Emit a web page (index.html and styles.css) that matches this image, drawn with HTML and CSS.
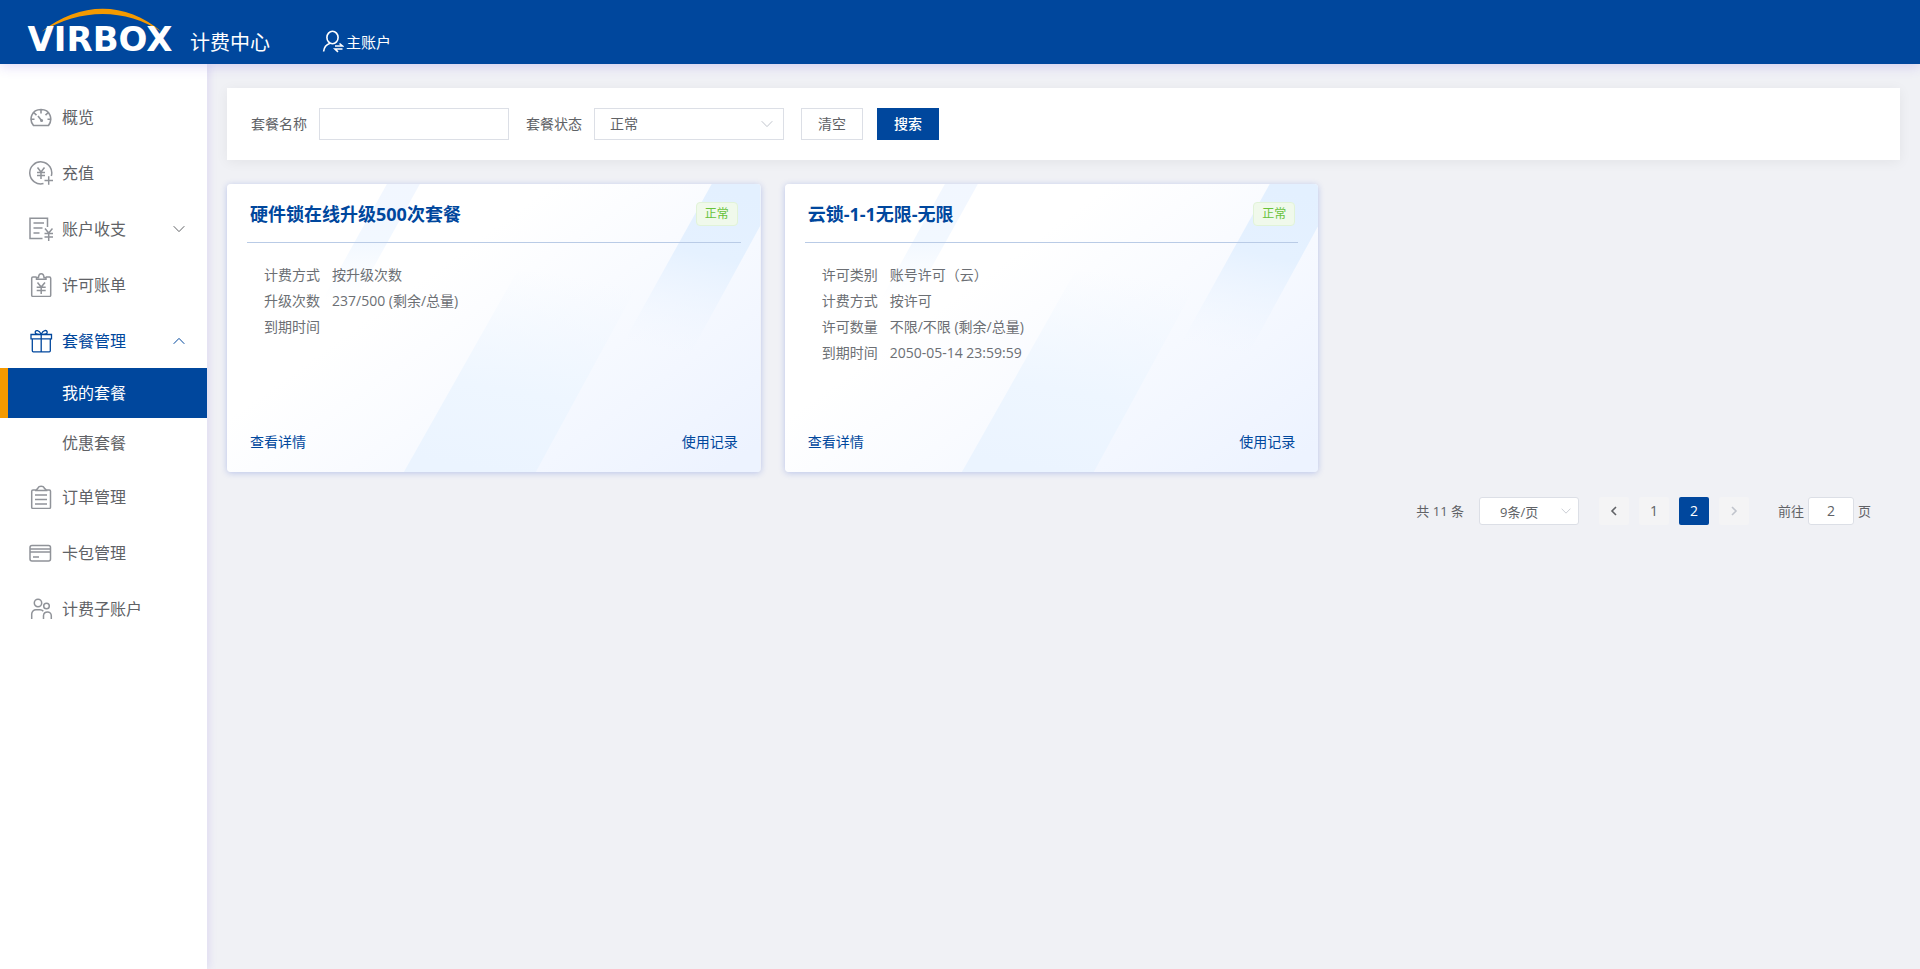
FILE: index.html
```html
<!DOCTYPE html>
<html lang="zh-CN">
<head>
<meta charset="utf-8">
<meta name="viewport" content="width=device-width, initial-scale=1">
<title>计费中心</title>
<link rel="stylesheet" href="styles.css">
</head>
<body>
<svg class="defs" width="0" height="0" aria-hidden="true">
  <defs>
    <linearGradient id="base" x1="0.2" y1="0.3" x2="1" y2="0.9">
      <stop offset="0" stop-color="#fff"/><stop offset="0.15" stop-color="#fff"/><stop offset="1" stop-color="#edf3ff"/>
    </linearGradient>
    <linearGradient id="band-a" x1="0" y1="0" x2="0" y2="1">
      <stop offset="0" stop-color="#f2f7ff"/><stop offset="0.5" stop-color="#f2f8ff"/><stop offset="1" stop-color="#f6faff" stop-opacity="0"/>
    </linearGradient>
    <linearGradient id="band-b" x1="0.6" y1="0" x2="0.4" y2="1">
      <stop offset="0" stop-color="#f0f7ff" stop-opacity="0"/><stop offset="0.6" stop-color="#eef6ff"/><stop offset="1" stop-color="#ebf4ff"/>
    </linearGradient>
    <linearGradient id="band-c" x1="0.6" y1="0" x2="0.4" y2="1">
      <stop offset="0" stop-color="#e3f0ff"/><stop offset="0.4" stop-color="#e5f1ff"/><stop offset="1" stop-color="#eef5ff" stop-opacity="0"/>
    </linearGradient>
    <symbol id="card-art" viewBox="0 0 534 288" preserveAspectRatio="none">
      <rect width="534" height="288" fill="url(#base)"/>
      <path d="M160 0h33l-64 115H96z" fill="url(#band-a)"/>
      <path d="M177 288 290 88h128L309 288z" fill="url(#band-b)"/>
      <path d="M485 0h49v41l-70 128h-73z" fill="url(#band-c)"/>
    </symbol>
    <symbol id="down" viewBox="0 0 12 12"><path d="M.7 3.2 6 8.6l5.3-5.4" fill="none" stroke="currentColor"/></symbol>
    <symbol id="up" viewBox="0 0 12 12"><path d="M.7 8.800 6 3.400l5.300 5.400" fill="none" stroke="currentColor"/></symbol>
  </defs>
</svg>

<header class="header">
  <a class="logo" href="#" aria-label="VIRBOX">
    <svg width="152" height="64" viewBox="0 0 152 64">
      <path d="M17 32C57 1 101 1 138 32C101 8 57 8 17 32z" fill="#f59a00"/>
      <text class="logo-text" x="76" y="51" text-anchor="middle">VIRBOX</text>
    </svg>
  </a>
  <span class="product">计费中心</span>
  <a class="account" href="#">
    <svg width="22" height="24" viewBox="0 0 22 24" fill="none" stroke="currentColor" stroke-width="1.600">
      <ellipse cx="10.500" cy="7.500" rx="5.600" ry="6.200"/>
      <path d="M8 13.200C4.300 14.500 2 17.500 1.600 21.500M13 16h7.500l-3-2.500M20.500 19H13l3 2.800"/>
    </svg>
    <span>主账户</span>
  </a>
</header>

<div class="body">
  <nav class="sidebar">
    <a class="item" href="#">
      <svg class="icon" viewBox="0 0 24 24"><path d="M4.500 20.500C-.5 14.500 2.500 4.500 12 4.500s12 10 7.500 16zM12 5v3.500M5.200 8l2.300 2.200M18.800 8l-2.300 2.200M2 14.300h3.500M22 14.300h-3.500M9 11l3.500 4.500" stroke-width="1.600"/><circle cx="12.600" cy="15.500" r=".8"/></svg>
      <span>概览</span></a>
    <a class="item" href="#">
      <svg class="icon" viewBox="0 0 24 24"><path d="M14.500 22.500A11 11 0 1 1 22.300 15M15.500 19.500h8.500M19.700 15.300v8.500M8.500 6.500l3.500 4.500 3.500-4.500M12 11v7M8 11.500h8M8 14.500h8"/></svg>
      <span>充值</span></a>
    <a class="item" href="#">
      <svg class="icon" viewBox="0 0 24 24"><path d="M18.500 10V1.200H1v20.300h12.500M4.500 6h10.500M4.500 11h9M4.500 16h6M16 11.500l3.700 4.500 3.800-4.500M19.700 16v8M15.500 16.500h8.500M15.500 20h8.500"/></svg>
      <span class="grow">账户收支</span><svg class="arrow"><use href="#down"/></svg></a>
    <a class="item" href="#">
      <svg class="icon" viewBox="0 0 24 24"><path d="M7.500 4H4a1.300 1.300 0 0 0-1.300 1.300v17A1.300 1.300 0 0 0 4 23.500h16.500a1.300 1.300 0 0 0 1.200-1.300v-17A1.300 1.300 0 0 0 20.500 4H17M7.500 6.200V4.500h2C9.700 2 10.500.8 12.200.8s2.600 1.200 2.800 3.700h2v1.700zM8.500 9.500l3.700 4.500L16 9.500M12.200 14v7M7.700 14.300h9M7.700 17.500h9"/></svg>
      <span>许可账单</span></a>
    <a class="item open" href="#">
      <svg class="icon" viewBox="0 0 24 24"><path d="M2 5.500h20.500v4.300H2zM3.300 9.800v12a1 1 0 0 0 1 1h16a1 1 0 0 0 1-1v-12M12.200 5.500v17M12 5.300C7.500 5.500 6 4.500 6.200 3c.3-2 3.800-2.500 6 2.300 2-4.800 5.600-4.300 6-2.300.2 1.500-1.500 2.500-6.200 2.300"/></svg>
      <span class="grow">套餐管理</span><svg class="arrow"><use href="#up"/></svg></a>
    <a class="sub active" href="#" aria-current="page">我的套餐</a>
    <a class="sub" href="#">优惠套餐</a>
    <a class="item" href="#">
      <svg class="icon" viewBox="0 0 24 24"><path d="M7 5H4a1.300 1.300 0 0 0-1.300 1.300v15.900A1.300 1.300 0 0 0 4 23.500h16.300a1.300 1.300 0 0 0 1.200-1.300V6.300A1.300 1.300 0 0 0 20.300 5H17.500M7 5.500C7.500 3.800 9 3.800 9.300 2.500 9.800.7 14.500.7 15 2.500c.3 1.300 2 1.300 2.500 3zM6 10h12M6 14.500h12M6 19h12"/></svg>
      <span>订单管理</span></a>
    <a class="item" href="#">
      <svg class="icon" viewBox="0 0 24 24"><rect x="1" y="4.500" width="20.500" height="15.500" rx="2"/><path d="M1 8h20.500M1 11h20.500M4 16h6"/></svg>
      <span>卡包管理</span></a>
    <a class="item" href="#">
      <svg class="icon" viewBox="0 0 24 24"><circle cx="9" cy="6" r="3.700"/><circle cx="17.500" cy="9" r="2.800"/><path d="M2.700 22v-5a4.300 4.300 0 0 1 4.300-4.300h4c1.300 0 2.500.5 3.300 1.500M14.500 22v-3.500a4 4 0 0 1 4-3.500 3.800 3.800 0 0 1 3.800 3.800V22"/></svg>
      <span>计费子账户</span></a>
  </nav>

  <main class="main">
    <form class="search" onsubmit="return false">
      <div class="field">
        <label for="name">套餐名称</label>
        <input class="control" id="name" type="text">
      </div>
      <div class="field">
        <label for="state">套餐状态</label>
        <div class="picker">
          <select class="control" id="state"><option>正常</option></select>
          <svg class="caret"><use href="#down"/></svg>
        </div>
      </div>
      <div class="buttons">
        <button class="btn" type="reset">清空</button>
        <button class="btn primary" type="submit">搜索</button>
      </div>
    </form>

    <section class="cards">
      <article class="card">
        <svg class="art" aria-hidden="true"><use href="#card-art"/></svg>
        <div class="card-head"><h2>硬件锁在线升级500次套餐</h2><span class="tag">正常</span></div>
        <dl class="info">
          <dt>计费方式</dt><dd>按升级次数</dd>
          <dt>升级次数</dt><dd>237/500 (剩余/总量)</dd>
          <dt>到期时间</dt><dd></dd>
        </dl>
        <div class="card-foot"><a href="#">查看详情</a><a href="#">使用记录</a></div>
      </article>
      <article class="card">
        <svg class="art" aria-hidden="true"><use href="#card-art"/></svg>
        <div class="card-head"><h2>云锁-1-1无限-无限</h2><span class="tag">正常</span></div>
        <dl class="info">
          <dt>许可类别</dt><dd>账号许可（云）</dd>
          <dt>计费方式</dt><dd>按许可</dd>
          <dt>许可数量</dt><dd>不限/不限 (剩余/总量)</dd>
          <dt>到期时间</dt><dd>2050-05-14 23:59:59</dd>
        </dl>
        <div class="card-foot"><a href="#">查看详情</a><a href="#">使用记录</a></div>
      </article>
    </section>

    <div class="pagination">
      <span>共 11 条</span>
      <div class="picker size">
        <select aria-label="每页条数"><option>9条/页</option></select>
        <svg class="caret"><use href="#down"/></svg>
      </div>
      <div class="pages">
        <button type="button" aria-label="上一页"><svg width="12" height="12" viewBox="0 0 12 12"><path d="M8 2 4 6l4 4"/></svg></button>
        <button type="button">1</button>
        <button type="button" class="current">2</button>
        <button type="button" aria-label="下一页" disabled><svg width="12" height="12" viewBox="0 0 12 12"><path d="m4 2 4 4-4 4"/></svg></button>
      </div>
      <label class="jump">前往 <input type="text" value="2"> 页</label>
    </div>
  </main>
</div>
</body>
</html>
```

FILE: styles.css
```css
* { box-sizing: border-box; }

body {
  margin: 0;
  min-height: 100vh;
  display: flex;
  flex-direction: column;
  background: #f0f1f5;
  color: #606266;
  font: 14px/20px "Open Sans", "Noto Sans CJK SC", sans-serif;
}

a { color: inherit; text-decoration: none; }
button, input, select { font: inherit; color: inherit; }
.defs { position: absolute; }

.header {
  position: relative;
  z-index: 2;
  display: flex;
  align-items: center;
  height: 64px;
  padding-left: 24px;
  background: #00479d;
  color: #fff;
  box-shadow: 0 2px 12px rgba(90, 60, 220, 0.2);
}
.logo, .logo svg { display: block; overflow: visible; }
.logo-text { font: bold 34px "DejaVu Sans", sans-serif; fill: #fff; }
.product { margin-left: 14px; padding-top: 21px; font-size: 20px; line-height: 24px; }
.account {
  display: flex;
  align-items: center;
  gap: 2px;
  margin-left: 52px;
  padding-top: 20px;
  font-size: 15px;
}

.body { flex: 1; display: flex; }

.sidebar {
  flex: none;
  width: 207px;
  padding-top: 24px;
  background: #fff;
  font-size: 16px;
  box-shadow: 2px 0 8px rgba(90, 60, 220, 0.12);
}
.item {
  display: flex;
  align-items: center;
  height: 56px;
  padding: 2px 22px 0 29px;
}
.icon {
  width: 24px;
  height: 24px;
  margin-right: 9px;
  fill: none;
  stroke: #909399;
  stroke-width: 1.5;
}
.grow { flex: 1; }
.arrow { width: 12px; height: 12px; }
.open { color: #00479d; }
.open .icon { stroke: #00479d; stroke-width: 1.3; }
.sub {
  display: flex;
  align-items: center;
  height: 50px;
  padding-left: 54px;
  border-left: 8px solid transparent;
}
.sub.active { border-color: #f59a00; background: #00479d; color: #fff; }

.main { flex: 1; min-width: 0; padding: 24px 20px; }

.search {
  display: flex;
  flex-wrap: wrap;
  gap: 17px;
  padding: 20px 24px;
  background: #fff;
  box-shadow: 0 2px 12px rgba(0, 0, 0, 0.06);
}
.field { display: flex; align-items: center; gap: 12px; }
.control {
  width: 190px;
  height: 32px;
  padding: 0 15px;
  border: 1px solid #dcdfe6;
  border-radius: 0;
  background: #fff;
}
.picker { position: relative; }
select { display: block; appearance: none; cursor: pointer; }
.caret {
  position: absolute;
  top: 0;
  bottom: 0;
  right: 11px;
  width: 12px;
  height: 12px;
  margin: auto;
  color: #c0c4cc;
  pointer-events: none;
}
.buttons { display: flex; gap: 14px; }
.btn {
  width: 62px;
  height: 32px;
  padding: 0;
  border: 1px solid #dcdfe6;
  background: #fff;
}
.btn.primary { border-color: #00479d; background: #00479d; color: #fff; font-weight: 500; }

.cards {
  display: grid;
  grid-template-columns: repeat(3, 1fr);
  gap: 24px;
  margin-top: 24px;
  padding-right: 24px;
}
.card {
  position: relative;
  z-index: 0;
  display: flex;
  flex-direction: column;
  min-height: 288px;
  padding: 0 20px 20px;
  border-radius: 4px;
  overflow: hidden;
  box-shadow: 0 1px 6px rgba(30, 70, 200, 0.26);
}
.art { position: absolute; z-index: -1; inset: 0; width: 100%; height: 100%; }
.card-head {
  display: flex;
  align-items: center;
  justify-content: space-between;
  height: 59px;
  padding: 2px 3px 0;
  border-bottom: 1px solid #b9cbe6;
}
h2 { margin: 0; font-size: 18px; line-height: 26px; font-weight: 700; color: #00479d; }
.tag {
  height: 24px;
  padding: 0 8px;
  border: 1px solid #e1f3d8;
  border-radius: 4px;
  background: #f0f9eb;
  color: #67c23a;
  font-size: 12px;
  line-height: 22px;
}
.info {
  flex: 1;
  display: grid;
  grid-template-columns: auto 1fr;
  align-content: start;
  column-gap: 12px;
  margin: 19px 17px 0;
  line-height: 26px;
  color: #6c6f74;
}
.info dd { margin: 0; }
.card-foot { display: flex; justify-content: space-between; padding: 0 3px; color: #00479d; }

.pagination {
  display: flex;
  align-items: center;
  justify-content: flex-end;
  margin-top: 25px;
  padding-right: 29px;
  font-size: 13px;
  line-height: 28px;
}
.size { margin: 0 20px 0 15px; }
.size select {
  width: 100px;
  height: 28px;
  padding: 0 20px 2px;
  border: 1px solid #dcdfe6;
  border-radius: 3px;
  background: #fff;
}
.size .caret { right: 8px; width: 10px; height: 10px; }
.pages { display: flex; gap: 10px; }
.pages button {
  display: flex;
  align-items: center;
  justify-content: center;
  width: 30px;
  height: 28px;
  padding: 0;
  border: 0;
  border-radius: 2px;
  background: #f4f4f5;
  font-size: 14px;
}
.pages svg { fill: none; stroke: currentColor; stroke-width: 1.6; }
.pages .current { background: #00479d; color: #fff; }
.pages button:disabled { color: #c0c4cc; }
.jump { display: flex; align-items: center; gap: 4px; margin-left: 29px; }
.jump input {
  width: 46px;
  height: 28px;
  padding: 0;
  border: 1px solid #dcdfe6;
  border-radius: 3px;
  background: #fff;
  font-size: 14px;
  text-align: center;
}
```
